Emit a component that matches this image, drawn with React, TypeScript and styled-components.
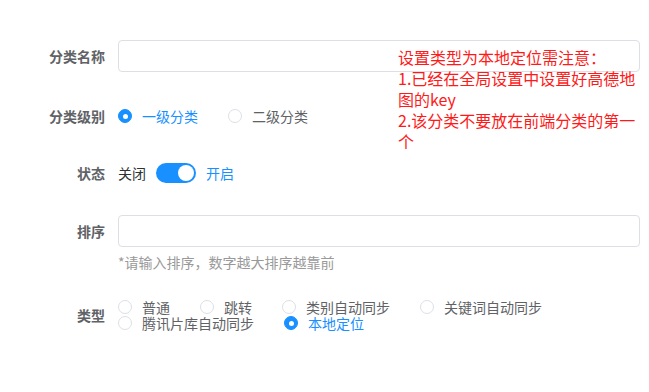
import styled, { createGlobalStyle } from "styled-components";

const GlobalStyle = createGlobalStyle`
  body {
    margin: 0;
    background: #fff;
    font-family: "Noto Sans CJK SC", "Noto Sans", sans-serif;
  }
`;

const Page = styled.div`
  position: relative;
  width: 649px;
  height: 392px;
  padding-top: 40px;
  box-sizing: border-box;
`;

const FormItem = styled.div<{ $top: number; $align?: string }>`
  display: flex;
  align-items: ${(p) => p.$align || "center"};
  margin-top: ${(p) => p.$top}px;
`;

const Label = styled.div<{ $height?: number }>`
  width: 105px;
  flex-shrink: 0;
  text-align: right;
  font-size: 14px;
  font-weight: bold;
  color: #606266;
  line-height: ${(p) => p.$height || 32}px;
`;

const Content = styled.div`
  margin-left: 13px;
  width: 522px;
  display: flex;
  flex-direction: column;
`;

const Input = styled.input`
  box-sizing: border-box;
  width: 100%;
  height: 32px;
  border: 1px solid #dcdfe6;
  border-radius: 4px;
  outline: none;
  padding: 0 12px;
  background: #fff;
`;

const Hint = styled.div`
  margin-top: 6px;
  font-size: 14px;
  line-height: 18px;
  color: #999;
`;

const RadioGroup = styled.div<{ $line: number }>`
  display: flex;
  flex-wrap: wrap;
  align-items: center;
  line-height: ${(p) => p.$line}px;
`;

const RadioItem = styled.label<{ $gap: number }>`
  display: inline-flex;
  align-items: center;
  margin-right: ${(p) => p.$gap}px;
  font-size: 14px;
  color: #606266;
  cursor: pointer;
`;

const Dot = styled.span<{ $on?: boolean }>`
  box-sizing: border-box;
  width: 14px;
  height: 14px;
  border-radius: 50%;
  border: 1px solid ${(p) => (p.$on ? "#1890ff" : "#dcdfe6")};
  background: ${(p) => (p.$on ? "#1890ff" : "#fff")};
  display: flex;
  align-items: center;
  justify-content: center;
  &::after {
    content: "";
    width: 5px;
    height: 5px;
    border-radius: 50%;
    background: #fff;
    display: ${(p) => (p.$on ? "block" : "none")};
  }
`;

const RadioText = styled.span<{ $on?: boolean }>`
  display: inline-block;
  padding-left: 10px;
  line-height: inherit;
  color: ${(p) => (p.$on ? "#1890ff" : "#606266")};
`;

const SwitchRow = styled.div`
  display: flex;
  align-items: center;
  height: 32px;
  font-size: 14px;
`;

const SwitchText = styled.span<{ $on?: boolean }>`
  color: ${(p) => (p.$on ? "#1890ff" : "#303133")};
`;

const Track = styled.span`
  position: relative;
  width: 40px;
  height: 20px;
  border-radius: 10px;
  background: #1890ff;
  margin: 0 10px;
  &::after {
    content: "";
    position: absolute;
    top: 2px;
    right: 2px;
    width: 16px;
    height: 16px;
    border-radius: 50%;
    background: #fff;
  }
`;

const Note = styled.div`
  position: absolute;
  left: 398px;
  top: 47px;
  width: 242px;
  font-size: 16px;
  line-height: 21px;
  color: #ff1a1a;
`;

type Opt = { text: string; on?: boolean };

const Radio = ({ text, on, gap = 30 }: Opt & { gap?: number }) => (
  <RadioItem $gap={gap}>
    <Dot $on={on} />
    <RadioText $on={on}>{text}</RadioText>
  </RadioItem>
);

const types: Opt[] = [
  { text: "普通" },
  { text: "跳转" },
  { text: "类别自动同步" },
  { text: "关键词自动同步" },
  { text: "腾讯片库自动同步" },
  { text: "本地定位", on: true },
];

export default function App() {
  return (
    <Page>
      <GlobalStyle />
      <FormItem $top={0}>
        <Label>分类名称</Label>
        <Content>
          <Input />
        </Content>
      </FormItem>

      <FormItem $top={28}>
        <Label>分类级别</Label>
        <Content>
          <RadioGroup $line={32}>
            <Radio text="一级分类" on />
            <Radio text="二级分类" />
          </RadioGroup>
        </Content>
      </FormItem>

      <FormItem $top={25}>
        <Label>状态</Label>
        <Content>
          <SwitchRow>
            <SwitchText>关闭</SwitchText>
            <Track />
            <SwitchText $on>开启</SwitchText>
          </SwitchRow>
        </Content>
      </FormItem>

      <FormItem $top={26} $align="flex-start">
        <Label>排序</Label>
        <Content>
          <Input />
          <Hint>*请输入排序，数字越大排序越靠前</Hint>
        </Content>
      </FormItem>

      <FormItem $top={28}>
        <Label>类型</Label>
        <Content>
          <RadioGroup $line={16}>
            {types.map((t) => (
              <Radio key={t.text} text={t.text} on={t.on} />
            ))}
          </RadioGroup>
        </Content>
      </FormItem>

      <Note>
        设置类型为本地定位需注意：
        <br />
        1.已经在全局设置中设置好高德地图的key
        <br />
        2.该分类不要放在前端分类的第一个
      </Note>
    </Page>
  );
}
